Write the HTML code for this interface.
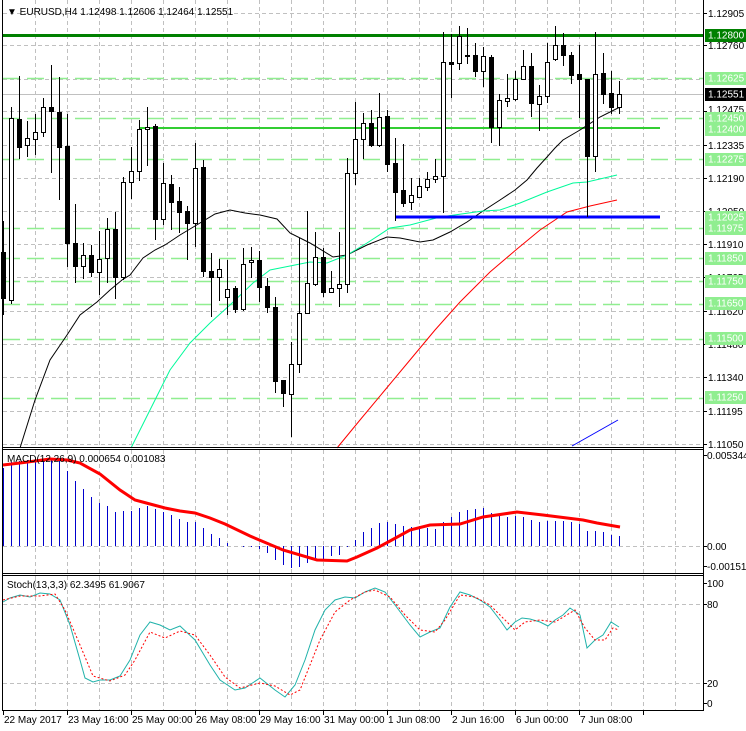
<!DOCTYPE html>
<html><head><meta charset="utf-8"><style>
html,body{margin:0;padding:0;background:#fff;width:746px;height:731px;overflow:hidden}
svg{display:block;font-family:"Liberation Sans",sans-serif;font-size:10px}
</style></head><body>
<svg id="s" width="746" height="731" xmlns="http://www.w3.org/2000/svg">
<rect width="746" height="731" fill="#fff"/>
<g id="grid" stroke="#c0c0c0" stroke-dasharray="4,3" stroke-width="1"></g>
<g id="lv"></g>
<g id="ind"></g>
<g id="cd"></g>
<g stroke="#000" fill="none">
<line x1="2.5" y1="0" x2="2.5" y2="711"/>
<line x1="703.5" y1="0" x2="703.5" y2="711"/>
<line x1="2" y1="447.5" x2="704" y2="447.5"/>
<line x1="2" y1="449.5" x2="704" y2="449.5"/>
<line x1="2" y1="573.5" x2="704" y2="573.5"/>
<line x1="2" y1="575.5" x2="704" y2="575.5"/>
<line x1="2" y1="710.5" x2="704" y2="710.5"/>
</g>
<g id="ticks" stroke="#000"></g>
<text x="7" y="15" fill="#000">▼ EURUSD,H4  1.12498 1.12606 1.12464 1.12551</text>
<text x="7" y="462" fill="#000">MACD(12,26,9) 0.000654 0.001083</text>
<text x="7" y="588" fill="#000">Stoch(13,3,3) 62.3495 61.9067</text>
<g fill="#000">
<text x="708" y="17">1.12905</text>
<text x="708" y="49">1.12760</text>
<text x="708" y="113">1.12475</text>
<text x="708" y="149">1.12335</text>
<text x="708" y="182">1.12190</text>
<text x="708" y="215">1.12050</text>
<text x="708" y="248">1.11910</text>
<text x="708" y="281">1.11765</text>
<text x="708" y="315">1.11620</text>
<text x="708" y="348">1.11480</text>
<text x="708" y="381">1.11340</text>
<text x="708" y="415">1.11195</text>
<text x="708" y="448">1.11050</text>
<text x="707" y="459">0.005344</text>
<text x="707" y="550">0.00</text>
<text x="707" y="570">-0.001511</text>
<text x="707" y="587">100</text>
<text x="707" y="608">80</text>
<text x="707" y="687">20</text>
<text x="707" y="707">0</text>
</g>
<g id="tags"></g>
<g fill="#000">
<text x="4" y="723">22 May 2017</text>
<text x="68" y="723">23 May 16:00</text>
<text x="132" y="723">25 May 00:00</text>
<text x="196" y="723">26 May 08:00</text>
<text x="260" y="723">29 May 16:00</text>
<text x="324" y="723">31 May 00:00</text>
<text x="388" y="723">1 Jun 08:00</text>
<text x="452" y="723">2 Jun 16:00</text>
<text x="516" y="723">6 Jun 00:00</text>
<text x="580" y="723">7 Jun 08:00</text>
</g>
</svg>
<script>
var NS="http://www.w3.org/2000/svg";
function el(p,t,a,txt){var e=document.createElementNS(NS,t);for(var k in a)e.setAttribute(k,a[k]);if(txt)e.textContent=txt;document.getElementById(p).appendChild(e);return e;}
for(var x=35.5;x<703;x+=32){el('grid','line',{x1:x,y1:0,x2:x,y2:447});el('grid','line',{x1:x,y1:450,x2:x,y2:573});el('grid','line',{x1:x,y1:576,x2:x,y2:710});}
[13,45,79,111,145,178,211,244,277,311,344,377,411,444].forEach(function(y){el('grid','line',{x1:3,y1:y+.5,x2:703,y2:y+.5});});
[604,683].forEach(function(y){el('grid','line',{x1:3,y1:y+.5,x2:703,y2:y+.5});});
el('grid','line',{x1:3,y1:546.5,x2:703,y2:546.5});
[78,118,159,228,258,281,304,339,398].forEach(function(y){el('lv','line',{x1:3,y1:y+.5,x2:703,y2:y+.5,stroke:'#90ee90','stroke-width':1.5,'stroke-dasharray':'17,7'});});
el('lv','line',{x1:3,y1:94.5,x2:703,y2:94.5,stroke:'#c0c0c0'});
el('lv','rect',{x:3,y:34,width:700,height:3,fill:'#008000'});
el('lv','rect',{x:140,y:127,width:520,height:2,fill:'#32cd32'});
function pl(pts,c,w,d){el('ind','polyline',{points:pts.map(function(p){return p.join(',')}).join(' '),fill:'none',stroke:c,'stroke-width':w||1,'stroke-dasharray':d||'none'});}
pl([[20,448],[35,400],[50,360],[67,335],[80,315],[97,302],[110,290],[122,280],[130,275],[143,258],[155,250],[165,245],[180,235],[200,223],[215,214],[230,210],[245,213],[260,215],[277,219],[290,233],[310,243],[333,257],[347,255],[367,245],[387,237],[400,238],[420,242],[433,240],[450,232],[467,222],[483,211],[500,200],[515,190],[527,180],[537,168],[547,157],[555,148],[563,140],[580,130],[600,117],[620,107]],'#000');
pl([[131,448],[150,410],[170,370],[190,343],[200,333],[210,323],[230,305],[253,283],[270,270],[290,266],[310,262],[327,263],[347,255],[367,243],[390,228],[410,225],[440,217],[483,211],[500,210],[520,203],[547,192],[573,183],[587,182],[617,175]],'#00fa9a');
pl([[337,448],[360,420],[385,390],[410,360],[435,330],[460,302],[490,272],[517,249],[540,230],[567,212],[590,206],[617,200]],'#ff0000');
pl([[572,446],[595,433],[618,420]],'#0000ff');
el('ind','rect',{x:395,y:215.5,width:265,height:3,fill:'#0000ff'});
var C=[[252,298,221,315],[300,118,107,304],[119,147,76,159],[145,138,121,157],[139,132,114,155],[132,107,98,137],[107,111,65,173],[112,147,77,200],[146,243,114,267],[243,266,204,283],[266,255,243,279],[255,272,245,277],[272,259,231,295],[258,229,218,283],[229,277,212,299],[277,182,177,280],[182,171,147,199],[171,129,120,181],[129,127,107,166],[126,219,124,240],[219,183,163,225],[184,202,175,230],[201,212,187,233],[211,223,206,260],[223,168,143,247],[167,271,160,277],[271,277,253,317],[277,269,259,301],[297,289,260,315],[288,309,286,313],[309,264,248,311],[262,260,247,278],[260,287,251,302],[286,307,278,313],[307,381,297,393],[380,393,380,407],[394,364,342,437],[364,313,238,373],[313,283,211,313],[284,257,232,286],[257,292,248,297],[292,288,271,293],[288,284,232,307],[284,173,158,293],[173,139,102,185],[139,123,113,159],[123,145,110,147],[145,117,93,147],[116,164,110,172],[163,192,138,221],[190,203,144,207],[202,195,178,210],[197,186,178,198],[187,179,172,191],[179,176,159,183],[176,62,32,213],[62,64,34,98],[63,36,26,70],[55,56,28,64],[55,71,43,77],[71,56,47,87],[57,127,55,143],[127,100,94,146],[101,98,74,107],[99,79,71,101],[79,66,50,80],[66,103,53,117],[104,96,85,131],[96,62,43,103],[59,45,26,61],[45,55,33,66],[55,75,52,84],[74,79,45,118],[79,156,79,217],[156,74,32,172],[73,94,53,104],[93,107,71,114],[107,94,81,114]];
C.forEach(function(c,i){var x=3+8*i;el('cd','line',{x1:x+.5,y1:c[2],x2:x+.5,y2:c[3],stroke:'#000'});var t=Math.min(c[0],c[1]),b=Math.max(c[0],c[1]);el('cd','rect',{x:x-1.5,y:t+.5,width:4,height:Math.max(b-t,1),fill:c[1]>c[0]?'#000':'#fff',stroke:'#000'});});
var H=[468,462,461,460,459,459,460,461,471,481,489,497,503,506,512,511,511,508,506,509,512,515,519,522,522,528,534,538,543,546,547,547,549,553,560,565,568,567,563,561,560,556,555,547,540,532,528,523,522,524,526,527,526,528,529,522,517,512,510,509,508,513,515,517,516,517,520,522,521,521,521,522,524,531,531,532,535,536];
H.forEach(function(y,i){var x=3.5+8*i;el('ind','line',{x1:x,y1:546,x2:x,y2:y,stroke:'#0000cd','stroke-width':1});});
pl([[3,465],[20,463],[35,461],[50,459],[67,460],[80,463],[100,474],[120,490],[135,500],[150,504],[165,508],[180,511],[195,513],[210,518],[225,524],[250,536],[283,550],[317,560],[347,561],[357,557],[377,548],[390,541],[410,530],[430,525],[460,524],[483,517],[517,512],[543,515],[583,520],[597,523],[620,527]],'#ff0000',3);
pl([[3,602],[10,598],[20,595],[30,597],[40,593],[50,594],[60,600],[70,625],[80,660],[85,678],[93,682],[100,680],[110,680],[120,676],[130,660],[140,635],[150,622],[160,625],[170,630],[180,626],[195,640],[210,665],[220,680],[235,690],[245,688],[260,678],[275,690],[285,697],[295,685],[305,660],[315,630],[325,610],[335,600],[345,597],[355,598],[365,592],[375,588],[385,592],[395,605],[410,625],[420,637],[430,632],[440,628],[450,607],[460,592],[470,595],[480,600],[490,607],[500,620],[507,630],[515,622],[522,618],[530,619],[540,622],[548,626],[555,620],[563,615],[570,608],[580,615],[587,648],[595,640],[603,635],[611,622],[619,627]],'#20b2aa');
pl([[3,600],[20,596],[40,596],[55,594],[65,610],[80,645],[93,676],[110,681],[125,675],[135,660],[150,632],[165,638],[180,631],[195,635],[210,655],[225,677],[240,688],[260,683],[275,686],[290,695],[300,690],[310,665],[320,640],[335,612],[350,600],[365,592],[375,590],[390,597],[405,615],[420,630],[435,632],[445,620],[460,595],[475,597],[490,605],[500,615],[515,630],[525,622],[540,620],[555,622],[565,616],[575,610],[585,628],[595,640],[605,640],[613,628],[619,630]],'#ff0000',1,'2,2');
[13,45,111,145,178,211,244,277,311,344,377,411,444,455,546,566,583,604,683,703].forEach(function(y){el('ticks','line',{x1:703,y1:y+.5,x2:707,y2:y+.5});});
for(var x=3.5;x<703;x+=64){el('ticks','line',{x1:x,y1:710,x2:x,y2:715});}
function tag(y,txt,bg){el('tags','rect',{x:705,y:y-6,width:41,height:13,fill:bg});el('tags','text',{x:708,y:y+3.5,fill:'#fff'},txt);}
tag(35,'1.12800','#008000');tag(78,'1.12625','#90ee90');tag(94,'1.12551','#000');tag(118,'1.12450','#90ee90');tag(129,'1.12400','#90ee90');tag(159,'1.12275','#90ee90');tag(217,'1.12025','#90ee90');tag(228,'1.11975','#90ee90');tag(258,'1.11850','#90ee90');tag(281,'1.11750','#90ee90');tag(303,'1.11650','#90ee90');tag(338,'1.11500','#90ee90');tag(397,'1.11250','#90ee90');
</script>
</body></html>
